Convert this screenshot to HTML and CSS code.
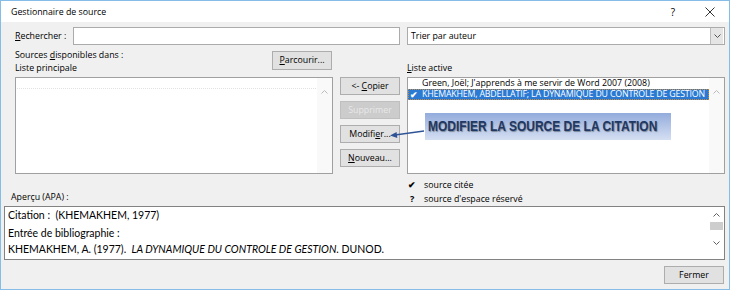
FILE: index.html
```html
<!DOCTYPE html>
<html lang="fr">
<head>
    <meta charset="UTF-8">
    <title>Gestionnaire de source</title>
    <link rel="stylesheet" href="styles.css">
</head>
<body>

<div class="dialog">
    <div class="titlebar">
        <span class="title">Gestionnaire de source</span>
        <span class="help">?</span>
        <span class="close">
            <svg width="10" height="10" viewBox="0 0 10 10"><path d="M0.5 0.5 L9.5 9.5 M9.5 0.5 L0.5 9.5" stroke="#333" stroke-width="1"/></svg>
        </span>
    </div>

    <div class="content">
        <div class="search-row">
            <label class="search-label" for="searchInput"><u>R</u>echercher :</label>
            <input type="text" id="searchInput" class="search">
            <div class="sort">
                <span class="sort-text">Trier par auteur</span>
                <span class="drop">
                    <svg width="7" height="4" viewBox="0 0 7 4"><polyline points="0.5,0.5 3.5,3.5 6.5,0.5" fill="none" stroke="#555" stroke-width="1"/></svg>
                </span>
            </div>
        </div>

        <div class="lists">
            <div class="left-head">
                <div class="head-text">Sources <u>d</u>isponibles dans :<br>Liste principale</div>
                <button type="button" class="btn browse"><u>P</u>arcourir...</button>
            </div>
            <div></div>
            <div class="right-head"><u>L</u>iste active</div>

            <div class="listbox">
                <div class="items">
                    <div class="focus-line"></div>
                </div>
                <div class="scroll">
                    <span class="arrow-up">
                        <svg width="7" height="4" viewBox="0 0 7 4"><polyline points="0.5,3.5 3.5,0.5 6.5,3.5" fill="none" stroke="#bbb" stroke-width="1"/></svg>
                    </span>
                </div>
            </div>

            <div class="actions">
                <button type="button" class="btn">&lt;- <u>C</u>opier</button>
                <button type="button" class="btn disabled">Supprimer</button>
                <button type="button" class="btn">Modifi<u>e</u>r...</button>
                <button type="button" class="btn"><u>N</u>ouveau...</button>
            </div>

            <div class="listbox">
                <div class="items">
                    <div class="row"><span class="mark"></span><span>Green, Joël; J'apprends à me servir de Word 2007 (2008)</span></div>
                    <div class="row selected"><span class="mark">✔</span><span class="sel-text">KHEMAKHEM, ABDELLATIF; LA DYNAMIQUE DU CONTROLE DE GESTION</span></div>
                </div>
                <div class="scroll">
                    <span class="arrow-up">
                        <svg width="7" height="4" viewBox="0 0 7 4"><polyline points="0.5,3.5 3.5,0.5 6.5,3.5" fill="none" stroke="#bbb" stroke-width="1"/></svg>
                    </span>
                </div>
            </div>
        </div>

        <div class="legend-row">
            <div class="preview-label">Aperçu (APA) :</div>
            <div></div>
            <div class="legend">
                <div><span class="legend-icon">✔</span>source citée</div>
                <div><span class="legend-icon q">?</span>source d'espace réservé</div>
            </div>
        </div>

        <div class="preview">
            <div class="preview-text">
                <p class="cite">Citation :&nbsp; (KHEMAKHEM, 1977)</p>
                <p>Entrée de bibliographie :</p>
                <p>KHEMAKHEM, A. (1977).&nbsp; <i>LA DYNAMIQUE DU CONTROLE DE GESTION</i>. DUNOD.</p>
            </div>
            <div class="pscroll">
                <span class="arrow">
                    <svg width="7" height="4" viewBox="0 0 7 4"><polyline points="0.5,3.5 3.5,0.5 6.5,3.5" fill="none" stroke="#606060" stroke-width="1"/></svg>
                </span>
                <span class="thumb"></span>
                <span class="track"></span>
                <span class="arrow">
                    <svg width="7" height="4" viewBox="0 0 7 4"><polyline points="0.5,0.5 3.5,3.5 6.5,0.5" fill="none" stroke="#606060" stroke-width="1"/></svg>
                </span>
            </div>
        </div>

        <div class="footer">
            <button type="button" class="btn close-btn">Fermer</button>
        </div>
    </div>

    <!-- annotation over the dialog -->
    <svg class="pointer" width="45" height="16" viewBox="0 0 45 16">
        <line x1="39" y1="6" x2="10" y2="10" stroke="#2f5496" stroke-width="1.3"/>
        <polygon points="5,10.5 12.3,13 11.6,7" fill="#2f5496"/>
    </svg>
    <div class="callout"><span class="callout-text">MODIFIER LA SOURCE DE LA CITATION</span></div>
</div>

</body>
</html>
```

FILE: styles.css
```css
* {
    box-sizing: border-box;
}

body {
    margin: 0;
    background: #fff;
    font-family: "Open Sans", "Liberation Sans", sans-serif;
    font-size: 8.8px;
    color: #000;
}

.dialog {
    position: relative;
    width: 730px;
    height: 290px;
    border: 1px solid #85bde8;
    background: #f0f0f0;
}

.titlebar {
    height: 21px;
    background: #fff;
    display: flex;
    align-items: center;
    padding: 1px 9px 0 10px;
}

.title {
    flex: 1;
}

.help {
    width: 20px;
    text-align: center;
    font-size: 10px;
    margin-right: 17px;
}

.close {
    width: 20px;
    display: flex;
    justify-content: center;
}

.content {
    padding: 0 4px 0 3px;
}

.search-row {
    display: flex;
    align-items: center;
    height: 18px;
    margin: 5px 0 0 11px;
}

.search-label {
    width: 58px;
}

.search {
    width: 327px;
    height: 18px;
    margin: 0 7px 0 0;
    border: 1px solid #ababab;
    background: #fff;
    padding: 0;
}

.sort {
    width: 318px;
    height: 18px;
    border: 1px solid #ababab;
    background: #fff;
    display: flex;
    align-items: center;
    padding-left: 3px;
}

.sort-text {
    flex: 1;
}

.drop {
    width: 13px;
    height: 16px;
    background: #e5e5e5;
    border-left: 1px solid #bcbcbc;
    margin-right: 1px;
    display: flex;
    align-items: center;
    justify-content: center;
}

.lists,
.legend-row {
    display: grid;
    grid-template-columns: 318px 60px 318px;
    column-gap: 7px;
    margin-left: 11px;
}

.lists {
    grid-template-rows: 32px 97px;
}

.left-head {
    display: flex;
    justify-content: space-between;
}

.head-text {
    align-self: flex-end;
    line-height: 13px;
    padding-bottom: 2px;
}

.right-head {
    align-self: end;
    line-height: 13px;
    padding-bottom: 2px;
}

.btn {
    font-family: inherit;
    font-size: inherit;
    color: #000;
    background: #e1e1e1;
    border: 1px solid #adadad;
    padding: 0;
    height: 18px;
    width: 60px;
    line-height: 15px;
}

.browse {
    margin: 6px 1px 0 0;
    height: 19px;
}

.btn.disabled {
    background: #cccccc;
    border-color: #bfbfbf;
    color: #e8e8e8;
}

.actions {
    display: flex;
    flex-direction: column;
    gap: 6px;
}

.listbox {
    border: 1px solid #a0a0a0;
    background: #fff;
    display: flex;
    overflow: hidden;
}

.items {
    flex: 1;
    min-width: 0;
}

.focus-line {
    margin: 10px 1px 0 1px;
    border-top: 1px dotted #e2e2e2;
}

.scroll {
    width: 15px;
    background: #f9f9f9;
    display: flex;
    justify-content: center;
}

.arrow-up {
    margin-top: 7px;
    height: 6px;
}

.row {
    display: flex;
    height: 11px;
    line-height: 11px;
    white-space: nowrap;
    overflow: hidden;
}

.row .mark {
    flex: none;
    width: 14px;
    padding-left: 2px;
    font-size: 9px;
    font-weight: bold;
}

.row.selected {
    background: #2a7ad4;
    color: #fff;
    outline: 1px dotted #c98a3b;
    outline-offset: -1px;
}

.sel-text {
    letter-spacing: -0.18px;
}

.legend-row {
    height: 32px;
    padding-top: 4px;
    line-height: 13px;
}

.preview-label {
    margin: 13px 0 0 -4px;
}

.legend-icon {
    display: inline-block;
    width: 17px;
    padding-left: 1px;
    font-size: 9px;
    font-weight: bold;
}

.legend-icon.q {
    padding-left: 3px;
    font-size: 9px;
}

.preview {
    height: 54px;
    border: 1px solid #828282;
    background: #fff;
    display: flex;
}

.preview-text {
    flex: 1;
    padding: 0 0 0 3px;
    font-family: Lato, "Liberation Sans", sans-serif;
    font-size: 10.5px;
    white-space: nowrap;
    overflow: hidden;
}

.preview-text p {
    margin: 0;
    line-height: 16px;
}

.preview-text .cite {
    margin-bottom: 2px;
}

.pscroll {
    width: 15px;
    display: flex;
    flex-direction: column;
    align-items: center;
    background: #fff;
}

.pscroll .arrow {
    height: 12px;
    display: flex;
    align-items: center;
}

.pscroll .arrow:first-child {
    margin-top: 2px;
}

.pscroll .arrow:last-child {
    margin-bottom: 10px;
}

.thumb {
    width: 13px;
    height: 8px;
    background: #cdcdcd;
    margin-top: 1px;
}

.track {
    flex: 1;
}

.footer {
    display: flex;
    justify-content: flex-end;
    margin-top: 6px;
}

.close-btn {
    margin-right: 1px;
}

.pointer {
    position: absolute;
    left: 384px;
    top: 124px;
}

.callout {
    position: absolute;
    left: 424px;
    top: 112px;
    width: 246px;
    height: 27px;
    background: linear-gradient(#93acdc, #d5dff2);
    padding: 5px 0 0 3px;
    white-space: nowrap;
}

.callout-text {
    display: inline-block;
    font-family: "Liberation Sans", Arial, sans-serif;
    font-weight: bold;
    font-size: 15px;
    line-height: 16px;
    color: #1f3864;
    text-shadow: 1px 1px 1px #7d8799;
    transform: scaleX(0.8);
    transform-origin: left center;
}
```
